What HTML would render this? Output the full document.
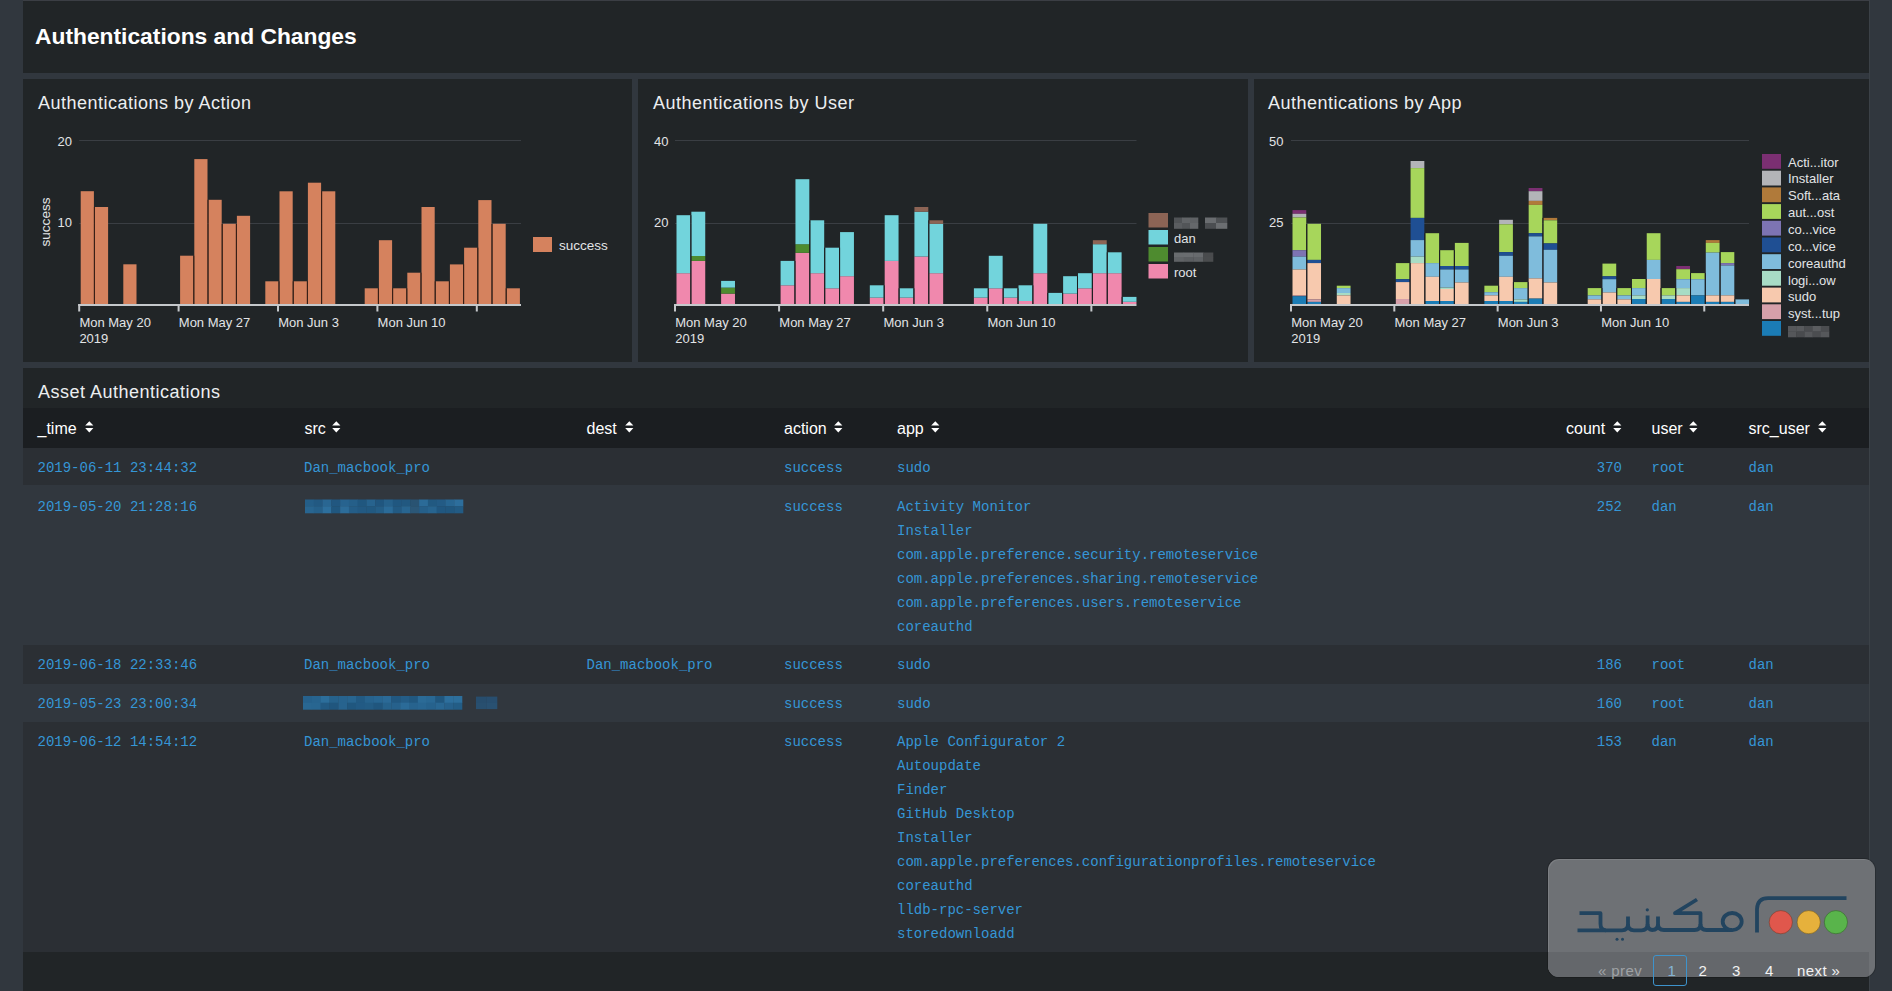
<!DOCTYPE html><html><head><meta charset="utf-8"><style>
html,body{margin:0;padding:0;}
body{width:1892px;height:991px;overflow:hidden;background:#31373e;position:relative;font-family:'Liberation Sans', sans-serif;}
</style></head><body>
<div style="position:absolute;left:23px;top:0px;width:1846px;height:73px;background:#212527;"></div>
<div style="position:absolute;left:23px;top:0px;width:1846px;height:1px;background:#3b3e44;"></div>
<div style="position:absolute;left:35px;top:25.10px;font-size:22.8px;line-height:22.8px;font-family:'Liberation Sans', sans-serif;color:#ffffff;font-weight:bold;white-space:pre;letter-spacing:0px;">Authentications and Changes</div>
<div style="position:absolute;left:23px;top:79px;width:609px;height:283px;background:#212527;"></div>
<div style="position:absolute;left:638px;top:79px;width:610px;height:283px;background:#212527;"></div>
<div style="position:absolute;left:1254px;top:79px;width:615px;height:283px;background:#212527;"></div>
<div style="position:absolute;left:38px;top:93.66px;font-size:18px;line-height:18px;font-family:'Liberation Sans', sans-serif;color:#eceef0;font-weight:normal;white-space:pre;letter-spacing:0.5px;">Authentications by Action</div>
<div style="position:absolute;left:653px;top:93.66px;font-size:18px;line-height:18px;font-family:'Liberation Sans', sans-serif;color:#eceef0;font-weight:normal;white-space:pre;letter-spacing:0.5px;">Authentications by User</div>
<div style="position:absolute;left:1268px;top:93.66px;font-size:18px;line-height:18px;font-family:'Liberation Sans', sans-serif;color:#eceef0;font-weight:normal;white-space:pre;letter-spacing:0.5px;">Authentications by App</div>
<svg style="position:absolute;left:0;top:0" width="1892" height="991"><rect x="79.2" y="140" width="441.8" height="1" fill="#3a3e43"/><rect x="79.2" y="223" width="441.8" height="1" fill="#3a3e43"/><rect x="80.70" y="191.2" width="13.20" height="112.80" fill="#d5825e"/><rect x="94.90" y="207" width="13.20" height="97.00" fill="#d5825e"/><rect x="123.30" y="264.3" width="13.20" height="39.70" fill="#d5825e"/><rect x="180.10" y="255.7" width="13.20" height="48.30" fill="#d5825e"/><rect x="194.30" y="159.1" width="13.20" height="144.90" fill="#d5825e"/><rect x="208.50" y="199.8" width="13.20" height="104.20" fill="#d5825e"/><rect x="222.70" y="223.8" width="13.20" height="80.20" fill="#d5825e"/><rect x="236.90" y="215.8" width="13.20" height="88.20" fill="#d5825e"/><rect x="265.30" y="281.3" width="13.20" height="22.70" fill="#d5825e"/><rect x="279.50" y="191.3" width="13.20" height="112.70" fill="#d5825e"/><rect x="293.70" y="281.3" width="13.20" height="22.70" fill="#d5825e"/><rect x="307.90" y="182.7" width="13.20" height="121.30" fill="#d5825e"/><rect x="322.10" y="191.3" width="13.20" height="112.70" fill="#d5825e"/><rect x="364.70" y="288.3" width="13.20" height="15.70" fill="#d5825e"/><rect x="378.90" y="240.2" width="13.20" height="63.80" fill="#d5825e"/><rect x="393.10" y="288.3" width="13.20" height="15.70" fill="#d5825e"/><rect x="407.30" y="272.7" width="13.20" height="31.30" fill="#d5825e"/><rect x="421.50" y="207" width="13.20" height="97.00" fill="#d5825e"/><rect x="435.70" y="281.3" width="13.20" height="22.70" fill="#d5825e"/><rect x="449.90" y="264.4" width="13.20" height="39.60" fill="#d5825e"/><rect x="464.10" y="247.7" width="13.20" height="56.30" fill="#d5825e"/><rect x="478.30" y="200.1" width="13.20" height="103.90" fill="#d5825e"/><rect x="492.50" y="223.8" width="13.20" height="80.20" fill="#d5825e"/><rect x="506.70" y="288.3" width="13.20" height="15.70" fill="#d5825e"/><rect x="93.90" y="207" width="1" height="97.00" fill="#3a1f15"/><rect x="193.30" y="255.7" width="1" height="48.30" fill="#3a1f15"/><rect x="207.50" y="199.8" width="1" height="104.20" fill="#3a1f15"/><rect x="221.70" y="223.8" width="1" height="80.20" fill="#3a1f15"/><rect x="235.90" y="223.8" width="1" height="80.20" fill="#3a1f15"/><rect x="278.50" y="281.3" width="1" height="22.70" fill="#3a1f15"/><rect x="292.70" y="281.3" width="1" height="22.70" fill="#3a1f15"/><rect x="306.90" y="281.3" width="1" height="22.70" fill="#3a1f15"/><rect x="321.10" y="191.3" width="1" height="112.70" fill="#3a1f15"/><rect x="377.90" y="288.3" width="1" height="15.70" fill="#3a1f15"/><rect x="392.10" y="288.3" width="1" height="15.70" fill="#3a1f15"/><rect x="406.30" y="288.3" width="1" height="15.70" fill="#3a1f15"/><rect x="420.50" y="272.7" width="1" height="31.30" fill="#3a1f15"/><rect x="434.70" y="281.3" width="1" height="22.70" fill="#3a1f15"/><rect x="448.90" y="281.3" width="1" height="22.70" fill="#3a1f15"/><rect x="463.10" y="264.4" width="1" height="39.60" fill="#3a1f15"/><rect x="477.30" y="247.7" width="1" height="56.30" fill="#3a1f15"/><rect x="491.50" y="223.8" width="1" height="80.20" fill="#3a1f15"/><rect x="505.70" y="288.3" width="1" height="15.70" fill="#3a1f15"/><rect x="78.2" y="304" width="442.8" height="2" fill="#c5c8cb"/><rect x="78.2" y="304" width="2" height="7.5" fill="#c5c8cb"/><rect x="177.6" y="304" width="2" height="7.5" fill="#c5c8cb"/><rect x="277.0" y="304" width="2" height="7.5" fill="#c5c8cb"/><rect x="376.4" y="304" width="2" height="7.5" fill="#c5c8cb"/><rect x="475.79999999999995" y="304" width="2" height="7.5" fill="#c5c8cb"/><rect x="675.0" y="140" width="461.5" height="1" fill="#3a3e43"/><rect x="675.0" y="223" width="461.5" height="1" fill="#3a3e43"/><rect x="676.50" y="273.2" width="13.87" height="30.80" fill="#f088ad"/><rect x="676.50" y="215.2" width="13.87" height="58.00" fill="#72d4dc"/><rect x="691.37" y="260.9" width="13.87" height="43.10" fill="#f088ad"/><rect x="691.37" y="256" width="13.87" height="4.90" fill="#4e8b2f"/><rect x="691.37" y="211.7" width="13.87" height="44.30" fill="#72d4dc"/><rect x="721.11" y="293.6" width="13.87" height="10.40" fill="#f088ad"/><rect x="721.11" y="287.6" width="13.87" height="6.00" fill="#4e8b2f"/><rect x="721.11" y="280.9" width="13.87" height="6.70" fill="#72d4dc"/><rect x="780.59" y="285.3" width="13.87" height="18.70" fill="#f088ad"/><rect x="780.59" y="260.9" width="13.87" height="24.40" fill="#72d4dc"/><rect x="795.46" y="252.8" width="13.87" height="51.20" fill="#f088ad"/><rect x="795.46" y="244.2" width="13.87" height="8.60" fill="#4e8b2f"/><rect x="795.46" y="179.2" width="13.87" height="65.00" fill="#72d4dc"/><rect x="810.33" y="273.2" width="13.87" height="30.80" fill="#f088ad"/><rect x="810.33" y="220.3" width="13.87" height="52.90" fill="#72d4dc"/><rect x="825.20" y="288.3" width="13.87" height="15.70" fill="#f088ad"/><rect x="825.20" y="247.7" width="13.87" height="40.60" fill="#72d4dc"/><rect x="840.07" y="276.2" width="13.87" height="27.80" fill="#f088ad"/><rect x="840.07" y="232.1" width="13.87" height="44.10" fill="#72d4dc"/><rect x="869.81" y="297.6" width="13.87" height="6.40" fill="#f088ad"/><rect x="869.81" y="285.3" width="13.87" height="12.30" fill="#72d4dc"/><rect x="884.68" y="260.9" width="13.87" height="43.10" fill="#f088ad"/><rect x="884.68" y="215.2" width="13.87" height="45.70" fill="#72d4dc"/><rect x="899.55" y="297.6" width="13.87" height="6.40" fill="#f088ad"/><rect x="899.55" y="288.3" width="13.87" height="9.30" fill="#72d4dc"/><rect x="914.42" y="256.5" width="13.87" height="47.50" fill="#f088ad"/><rect x="914.42" y="211.7" width="13.87" height="44.80" fill="#72d4dc"/><rect x="914.42" y="207" width="13.87" height="4.70" fill="#8c6455"/><rect x="929.29" y="273.2" width="13.87" height="30.80" fill="#f088ad"/><rect x="929.29" y="223.8" width="13.87" height="49.40" fill="#72d4dc"/><rect x="929.29" y="220.3" width="13.87" height="3.50" fill="#8c6455"/><rect x="973.90" y="297.6" width="13.87" height="6.40" fill="#f088ad"/><rect x="973.90" y="288.3" width="13.87" height="9.30" fill="#72d4dc"/><rect x="988.77" y="288.3" width="13.87" height="15.70" fill="#f088ad"/><rect x="988.77" y="255.8" width="13.87" height="32.50" fill="#72d4dc"/><rect x="1003.64" y="297.6" width="13.87" height="6.40" fill="#f088ad"/><rect x="1003.64" y="288.3" width="13.87" height="9.30" fill="#72d4dc"/><rect x="1018.51" y="301" width="13.87" height="3.00" fill="#f088ad"/><rect x="1018.51" y="285.3" width="13.87" height="15.70" fill="#72d4dc"/><rect x="1033.38" y="273.2" width="13.87" height="30.80" fill="#f088ad"/><rect x="1033.38" y="223.8" width="13.87" height="49.40" fill="#72d4dc"/><rect x="1048.25" y="292.9" width="13.87" height="11.10" fill="#72d4dc"/><rect x="1063.12" y="293.6" width="13.87" height="10.40" fill="#f088ad"/><rect x="1063.12" y="276.2" width="13.87" height="17.40" fill="#72d4dc"/><rect x="1077.99" y="288.3" width="13.87" height="15.70" fill="#f088ad"/><rect x="1077.99" y="273.2" width="13.87" height="15.10" fill="#72d4dc"/><rect x="1092.86" y="273.2" width="13.87" height="30.80" fill="#f088ad"/><rect x="1092.86" y="244.2" width="13.87" height="29.00" fill="#72d4dc"/><rect x="1092.86" y="240.2" width="13.87" height="4.00" fill="#8c6455"/><rect x="1107.73" y="273.2" width="13.87" height="30.80" fill="#f088ad"/><rect x="1107.73" y="252.3" width="13.87" height="20.90" fill="#72d4dc"/><rect x="1122.60" y="301.8" width="13.87" height="2.20" fill="#f088ad"/><rect x="1122.60" y="296.9" width="13.87" height="4.90" fill="#72d4dc"/><rect x="690.37" y="215.2" width="1" height="88.80" fill="#1c1c1f"/><rect x="794.46" y="260.9" width="1" height="43.10" fill="#1c1c1f"/><rect x="809.33" y="220.3" width="1" height="83.70" fill="#1c1c1f"/><rect x="824.20" y="247.7" width="1" height="56.30" fill="#1c1c1f"/><rect x="839.07" y="247.7" width="1" height="56.30" fill="#1c1c1f"/><rect x="883.68" y="285.3" width="1" height="18.70" fill="#1c1c1f"/><rect x="898.55" y="288.3" width="1" height="15.70" fill="#1c1c1f"/><rect x="913.42" y="288.3" width="1" height="15.70" fill="#1c1c1f"/><rect x="928.29" y="220.3" width="1" height="83.70" fill="#1c1c1f"/><rect x="987.77" y="288.3" width="1" height="15.70" fill="#1c1c1f"/><rect x="1002.64" y="288.3" width="1" height="15.70" fill="#1c1c1f"/><rect x="1017.51" y="288.3" width="1" height="15.70" fill="#1c1c1f"/><rect x="1032.38" y="285.3" width="1" height="18.70" fill="#1c1c1f"/><rect x="1047.25" y="292.9" width="1" height="11.10" fill="#1c1c1f"/><rect x="1062.12" y="292.9" width="1" height="11.10" fill="#1c1c1f"/><rect x="1076.99" y="276.2" width="1" height="27.80" fill="#1c1c1f"/><rect x="1091.86" y="273.2" width="1" height="30.80" fill="#1c1c1f"/><rect x="1106.73" y="252.3" width="1" height="51.70" fill="#1c1c1f"/><rect x="1121.60" y="296.9" width="1" height="7.10" fill="#1c1c1f"/><rect x="674.0" y="304" width="462.5" height="2" fill="#c5c8cb"/><rect x="674.0" y="304" width="2" height="7.5" fill="#c5c8cb"/><rect x="778.09" y="304" width="2" height="7.5" fill="#c5c8cb"/><rect x="882.18" y="304" width="2" height="7.5" fill="#c5c8cb"/><rect x="986.27" y="304" width="2" height="7.5" fill="#c5c8cb"/><rect x="1090.36" y="304" width="2" height="7.5" fill="#c5c8cb"/><rect x="1291.0" y="140" width="458.0" height="1" fill="#3a3e43"/><rect x="1291.0" y="223" width="458.0" height="1" fill="#3a3e43"/><rect x="1292.50" y="210.1" width="13.76" height="3.70" fill="#7b2f72"/><rect x="1292.50" y="213.8" width="13.76" height="3.70" fill="#b3b4b8"/><rect x="1292.50" y="217.5" width="13.76" height="32.70" fill="#a7d65b"/><rect x="1292.50" y="250.2" width="13.76" height="6.40" fill="#7d74b3"/><rect x="1292.50" y="256.6" width="13.76" height="12.90" fill="#7fbcdc"/><rect x="1292.50" y="269.5" width="13.76" height="25.90" fill="#f7c9ae"/><rect x="1292.50" y="295.4" width="13.76" height="0.80" fill="#d6a0aa"/><rect x="1292.50" y="296.2" width="13.76" height="7.80" fill="#1b7cb5"/><rect x="1307.26" y="223.8" width="13.76" height="36.10" fill="#a7d65b"/><rect x="1307.26" y="259.9" width="13.76" height="3.20" fill="#1f4f93"/><rect x="1307.26" y="263.1" width="13.76" height="36.30" fill="#f7c9ae"/><rect x="1307.26" y="299.4" width="13.76" height="2.50" fill="#d6a0aa"/><rect x="1307.26" y="301.9" width="13.76" height="2.10" fill="#1b7cb5"/><rect x="1336.78" y="285.7" width="13.76" height="2.40" fill="#a7d65b"/><rect x="1336.78" y="288.1" width="13.76" height="4.90" fill="#7fbcdc"/><rect x="1336.78" y="293" width="13.76" height="2.40" fill="#a8dcc5"/><rect x="1336.78" y="295.4" width="13.76" height="8.60" fill="#f7c9ae"/><rect x="1395.82" y="263.1" width="13.76" height="16.10" fill="#a7d65b"/><rect x="1395.82" y="279.2" width="13.76" height="2.90" fill="#1f4f93"/><rect x="1395.82" y="282.1" width="13.76" height="16.90" fill="#f7c9ae"/><rect x="1395.82" y="299" width="13.76" height="5.00" fill="#d6a0aa"/><rect x="1410.58" y="161" width="13.76" height="7.10" fill="#b3b4b8"/><rect x="1410.58" y="168.1" width="13.76" height="49.80" fill="#a7d65b"/><rect x="1410.58" y="217.9" width="13.76" height="22.20" fill="#1f4f93"/><rect x="1410.58" y="240.1" width="13.76" height="16.50" fill="#7fbcdc"/><rect x="1410.58" y="256.6" width="13.76" height="6.50" fill="#a8dcc5"/><rect x="1410.58" y="263.1" width="13.76" height="40.90" fill="#f7c9ae"/><rect x="1425.34" y="233.2" width="13.76" height="29.90" fill="#a7d65b"/><rect x="1425.34" y="263.1" width="13.76" height="13.70" fill="#7fbcdc"/><rect x="1425.34" y="276.8" width="13.76" height="24.20" fill="#f7c9ae"/><rect x="1425.34" y="301" width="13.76" height="3.00" fill="#1b7cb5"/><rect x="1440.10" y="250.2" width="13.76" height="15.80" fill="#a7d65b"/><rect x="1440.10" y="266" width="13.76" height="3.50" fill="#1f4f93"/><rect x="1440.10" y="269.5" width="13.76" height="18.10" fill="#7fbcdc"/><rect x="1440.10" y="287.6" width="13.76" height="1.40" fill="#a8dcc5"/><rect x="1440.10" y="289" width="13.76" height="12.00" fill="#f7c9ae"/><rect x="1440.10" y="301" width="13.76" height="3.00" fill="#1b7cb5"/><rect x="1454.86" y="242.9" width="13.76" height="23.10" fill="#a7d65b"/><rect x="1454.86" y="266" width="13.76" height="3.50" fill="#1f4f93"/><rect x="1454.86" y="269.5" width="13.76" height="13.00" fill="#7fbcdc"/><rect x="1454.86" y="282.5" width="13.76" height="21.50" fill="#f7c9ae"/><rect x="1484.38" y="285.7" width="13.76" height="6.50" fill="#a7d65b"/><rect x="1484.38" y="292.2" width="13.76" height="3.20" fill="#7fbcdc"/><rect x="1484.38" y="295.4" width="13.76" height="5.60" fill="#f7c9ae"/><rect x="1484.38" y="301" width="13.76" height="3.00" fill="#1b7cb5"/><rect x="1499.14" y="219.8" width="13.76" height="4.50" fill="#b3b4b8"/><rect x="1499.14" y="224.3" width="13.76" height="27.80" fill="#a7d65b"/><rect x="1499.14" y="252.1" width="13.76" height="3.70" fill="#1f4f93"/><rect x="1499.14" y="255.8" width="13.76" height="21.00" fill="#7fbcdc"/><rect x="1499.14" y="276.8" width="13.76" height="24.20" fill="#f7c9ae"/><rect x="1499.14" y="301" width="13.76" height="3.00" fill="#1b7cb5"/><rect x="1513.90" y="282.1" width="13.76" height="6.00" fill="#a7d65b"/><rect x="1513.90" y="288.1" width="13.76" height="11.30" fill="#7fbcdc"/><rect x="1513.90" y="299.4" width="13.76" height="2.50" fill="#a8dcc5"/><rect x="1513.90" y="301.9" width="13.76" height="2.10" fill="#1b7cb5"/><rect x="1528.66" y="188" width="13.76" height="3.20" fill="#7b2f72"/><rect x="1528.66" y="191.2" width="13.76" height="9.70" fill="#b3b4b8"/><rect x="1528.66" y="200.9" width="13.76" height="4.00" fill="#b07a3a"/><rect x="1528.66" y="204.9" width="13.76" height="28.30" fill="#a7d65b"/><rect x="1528.66" y="233.2" width="13.76" height="3.20" fill="#1f4f93"/><rect x="1528.66" y="236.4" width="13.76" height="42.00" fill="#7fbcdc"/><rect x="1528.66" y="278.4" width="13.76" height="20.20" fill="#f7c9ae"/><rect x="1528.66" y="298.6" width="13.76" height="5.40" fill="#1b7cb5"/><rect x="1543.42" y="217.9" width="13.76" height="2.40" fill="#b07a3a"/><rect x="1543.42" y="220.3" width="13.76" height="23.10" fill="#a7d65b"/><rect x="1543.42" y="243.4" width="13.76" height="6.40" fill="#1f4f93"/><rect x="1543.42" y="249.8" width="13.76" height="32.70" fill="#7fbcdc"/><rect x="1543.42" y="282.5" width="13.76" height="21.50" fill="#f7c9ae"/><rect x="1587.70" y="288.1" width="13.76" height="7.30" fill="#a7d65b"/><rect x="1587.70" y="295.4" width="13.76" height="4.00" fill="#7fbcdc"/><rect x="1587.70" y="299.4" width="13.76" height="4.60" fill="#f7c9ae"/><rect x="1602.46" y="263.6" width="13.76" height="12.70" fill="#a7d65b"/><rect x="1602.46" y="276.3" width="13.76" height="2.90" fill="#1f4f93"/><rect x="1602.46" y="279.2" width="13.76" height="13.30" fill="#7fbcdc"/><rect x="1602.46" y="292.5" width="13.76" height="11.50" fill="#f7c9ae"/><rect x="1617.22" y="288.1" width="13.76" height="7.30" fill="#a7d65b"/><rect x="1617.22" y="295.4" width="13.76" height="4.00" fill="#7fbcdc"/><rect x="1617.22" y="299.4" width="13.76" height="4.60" fill="#f7c9ae"/><rect x="1631.98" y="279" width="13.76" height="9.10" fill="#a7d65b"/><rect x="1631.98" y="288.1" width="13.76" height="7.30" fill="#7fbcdc"/><rect x="1631.98" y="295.4" width="13.76" height="3.60" fill="#a8dcc5"/><rect x="1631.98" y="299" width="13.76" height="5.00" fill="#1b7cb5"/><rect x="1646.74" y="233.2" width="13.76" height="26.70" fill="#a7d65b"/><rect x="1646.74" y="259.9" width="13.76" height="19.10" fill="#7fbcdc"/><rect x="1646.74" y="279" width="13.76" height="25.00" fill="#f7c9ae"/><rect x="1661.50" y="288.1" width="13.76" height="7.30" fill="#a7d65b"/><rect x="1661.50" y="295.4" width="13.76" height="3.60" fill="#a8dcc5"/><rect x="1661.50" y="299" width="13.76" height="5.00" fill="#1b7cb5"/><rect x="1676.26" y="266" width="13.76" height="3.20" fill="#7b2f72"/><rect x="1676.26" y="269.2" width="13.76" height="10.00" fill="#a7d65b"/><rect x="1676.26" y="279.2" width="13.76" height="8.90" fill="#7fbcdc"/><rect x="1676.26" y="288.1" width="13.76" height="7.30" fill="#a8dcc5"/><rect x="1676.26" y="295.4" width="13.76" height="6.50" fill="#f7c9ae"/><rect x="1676.26" y="301.9" width="13.76" height="2.10" fill="#1b7cb5"/><rect x="1691.02" y="273.1" width="13.76" height="6.10" fill="#a7d65b"/><rect x="1691.02" y="279.2" width="13.76" height="16.20" fill="#7fbcdc"/><rect x="1691.02" y="295.4" width="13.76" height="8.60" fill="#1b7cb5"/><rect x="1705.78" y="240.1" width="13.76" height="2.80" fill="#b07a3a"/><rect x="1705.78" y="242.9" width="13.76" height="9.70" fill="#a7d65b"/><rect x="1705.78" y="252.6" width="13.76" height="42.80" fill="#7fbcdc"/><rect x="1705.78" y="295.4" width="13.76" height="6.50" fill="#f7c9ae"/><rect x="1705.78" y="301.9" width="13.76" height="2.10" fill="#1b7cb5"/><rect x="1720.54" y="252.1" width="13.76" height="11.00" fill="#a7d65b"/><rect x="1720.54" y="263.1" width="13.76" height="2.40" fill="#7d74b3"/><rect x="1720.54" y="265.5" width="13.76" height="29.90" fill="#7fbcdc"/><rect x="1720.54" y="295.4" width="13.76" height="6.50" fill="#f7c9ae"/><rect x="1720.54" y="301.9" width="13.76" height="2.10" fill="#1b7cb5"/><rect x="1735.30" y="299.4" width="13.76" height="4.60" fill="#7fbcdc"/><rect x="1306.26" y="223.8" width="1" height="80.20" fill="#1c1c1f"/><rect x="1409.58" y="263.1" width="1" height="40.90" fill="#1c1c1f"/><rect x="1424.34" y="233.2" width="1" height="70.80" fill="#1c1c1f"/><rect x="1439.10" y="250.2" width="1" height="53.80" fill="#1c1c1f"/><rect x="1453.86" y="250.2" width="1" height="53.80" fill="#1c1c1f"/><rect x="1498.14" y="285.7" width="1" height="18.30" fill="#1c1c1f"/><rect x="1512.90" y="282.1" width="1" height="21.90" fill="#1c1c1f"/><rect x="1527.66" y="282.1" width="1" height="21.90" fill="#1c1c1f"/><rect x="1542.42" y="217.9" width="1" height="86.10" fill="#1c1c1f"/><rect x="1601.46" y="288.1" width="1" height="15.90" fill="#1c1c1f"/><rect x="1616.22" y="288.1" width="1" height="15.90" fill="#1c1c1f"/><rect x="1630.98" y="288.1" width="1" height="15.90" fill="#1c1c1f"/><rect x="1645.74" y="279" width="1" height="25.00" fill="#1c1c1f"/><rect x="1660.50" y="288.1" width="1" height="15.90" fill="#1c1c1f"/><rect x="1675.26" y="288.1" width="1" height="15.90" fill="#1c1c1f"/><rect x="1690.02" y="273.1" width="1" height="30.90" fill="#1c1c1f"/><rect x="1704.78" y="273.1" width="1" height="30.90" fill="#1c1c1f"/><rect x="1719.54" y="252.1" width="1" height="51.90" fill="#1c1c1f"/><rect x="1734.30" y="299.4" width="1" height="4.60" fill="#1c1c1f"/><rect x="1290.0" y="304" width="459.0" height="2" fill="#c5c8cb"/><rect x="1290.0" y="304" width="2" height="7.5" fill="#c5c8cb"/><rect x="1393.32" y="304" width="2" height="7.5" fill="#c5c8cb"/><rect x="1496.6399999999999" y="304" width="2" height="7.5" fill="#c5c8cb"/><rect x="1599.96" y="304" width="2" height="7.5" fill="#c5c8cb"/><rect x="1703.28" y="304" width="2" height="7.5" fill="#c5c8cb"/><rect x="533" y="237" width="19" height="15" fill="#d5825e"/><rect x="1148.5" y="213" width="19.5" height="14.5" fill="#8c6455"/><rect x="1148.5" y="230" width="19.5" height="14.5" fill="#72d4dc"/><rect x="1148.5" y="247" width="19.5" height="14.5" fill="#4e8b2f"/><rect x="1148.5" y="264" width="19.5" height="14.5" fill="#f088ad"/><rect x="1762" y="154.0" width="19" height="14.8" fill="#7b2f72"/><rect x="1762" y="170.7" width="19" height="14.8" fill="#b3b4b8"/><rect x="1762" y="187.4" width="19" height="14.8" fill="#b07a3a"/><rect x="1762" y="204.1" width="19" height="14.8" fill="#a7d65b"/><rect x="1762" y="220.8" width="19" height="14.8" fill="#7d74b3"/><rect x="1762" y="237.5" width="19" height="14.8" fill="#1f4f93"/><rect x="1762" y="254.2" width="19" height="14.8" fill="#7fbcdc"/><rect x="1762" y="270.9" width="19" height="14.8" fill="#a8dcc5"/><rect x="1762" y="287.6" width="19" height="14.8" fill="#f7c9ae"/><rect x="1762" y="304.3" width="19" height="14.8" fill="#d6a0aa"/><rect x="1762" y="321.0" width="19" height="14.8" fill="#1b7cb5"/></svg>
<div style="position:absolute;left:32px;width:40px;text-align:right;top:135.10px;font-size:13px;line-height:13px;color:#e2e4e6">20</div>
<div style="position:absolute;left:32px;width:40px;text-align:right;top:216.00px;font-size:13px;line-height:13px;color:#e2e4e6">10</div>
<div style="position:absolute;left:628.5px;width:40px;text-align:right;top:135.10px;font-size:13px;line-height:13px;color:#e2e4e6">40</div>
<div style="position:absolute;left:628.5px;width:40px;text-align:right;top:216.00px;font-size:13px;line-height:13px;color:#e2e4e6">20</div>
<div style="position:absolute;left:1243.5px;width:40px;text-align:right;top:135.10px;font-size:13px;line-height:13px;color:#e2e4e6">50</div>
<div style="position:absolute;left:1243.5px;width:40px;text-align:right;top:216.00px;font-size:13px;line-height:13px;color:#e2e4e6">25</div>
<div style="position:absolute;left:21px;top:214.2px;width:50px;height:16px;font-size:13.6px;line-height:16px;color:#e2e4e6;transform:rotate(-90deg);transform-origin:25px 8px;text-align:center">success</div>
<div style="position:absolute;left:79.4px;top:315.50px;font-size:13px;line-height:13px;font-family:'Liberation Sans', sans-serif;color:#e2e4e6;font-weight:normal;white-space:pre;letter-spacing:0px;">Mon May 20</div>
<div style="position:absolute;left:178.8px;top:315.50px;font-size:13px;line-height:13px;font-family:'Liberation Sans', sans-serif;color:#e2e4e6;font-weight:normal;white-space:pre;letter-spacing:0px;">Mon May 27</div>
<div style="position:absolute;left:278.2px;top:315.50px;font-size:13px;line-height:13px;font-family:'Liberation Sans', sans-serif;color:#e2e4e6;font-weight:normal;white-space:pre;letter-spacing:0px;">Mon Jun 3</div>
<div style="position:absolute;left:377.6px;top:315.50px;font-size:13px;line-height:13px;font-family:'Liberation Sans', sans-serif;color:#e2e4e6;font-weight:normal;white-space:pre;letter-spacing:0px;">Mon Jun 10</div>
<div style="position:absolute;left:79.4px;top:332.00px;font-size:13px;line-height:13px;font-family:'Liberation Sans', sans-serif;color:#e2e4e6;font-weight:normal;white-space:pre;letter-spacing:0px;">2019</div>
<div style="position:absolute;left:675.2px;top:315.50px;font-size:13px;line-height:13px;font-family:'Liberation Sans', sans-serif;color:#e2e4e6;font-weight:normal;white-space:pre;letter-spacing:0px;">Mon May 20</div>
<div style="position:absolute;left:779.3px;top:315.50px;font-size:13px;line-height:13px;font-family:'Liberation Sans', sans-serif;color:#e2e4e6;font-weight:normal;white-space:pre;letter-spacing:0px;">Mon May 27</div>
<div style="position:absolute;left:883.4px;top:315.50px;font-size:13px;line-height:13px;font-family:'Liberation Sans', sans-serif;color:#e2e4e6;font-weight:normal;white-space:pre;letter-spacing:0px;">Mon Jun 3</div>
<div style="position:absolute;left:987.5px;top:315.50px;font-size:13px;line-height:13px;font-family:'Liberation Sans', sans-serif;color:#e2e4e6;font-weight:normal;white-space:pre;letter-spacing:0px;">Mon Jun 10</div>
<div style="position:absolute;left:675.2px;top:332.00px;font-size:13px;line-height:13px;font-family:'Liberation Sans', sans-serif;color:#e2e4e6;font-weight:normal;white-space:pre;letter-spacing:0px;">2019</div>
<div style="position:absolute;left:1291.2px;top:315.50px;font-size:13px;line-height:13px;font-family:'Liberation Sans', sans-serif;color:#e2e4e6;font-weight:normal;white-space:pre;letter-spacing:0px;">Mon May 20</div>
<div style="position:absolute;left:1394.5px;top:315.50px;font-size:13px;line-height:13px;font-family:'Liberation Sans', sans-serif;color:#e2e4e6;font-weight:normal;white-space:pre;letter-spacing:0px;">Mon May 27</div>
<div style="position:absolute;left:1497.8px;top:315.50px;font-size:13px;line-height:13px;font-family:'Liberation Sans', sans-serif;color:#e2e4e6;font-weight:normal;white-space:pre;letter-spacing:0px;">Mon Jun 3</div>
<div style="position:absolute;left:1601.2px;top:315.50px;font-size:13px;line-height:13px;font-family:'Liberation Sans', sans-serif;color:#e2e4e6;font-weight:normal;white-space:pre;letter-spacing:0px;">Mon Jun 10</div>
<div style="position:absolute;left:1291.2px;top:332.00px;font-size:13px;line-height:13px;font-family:'Liberation Sans', sans-serif;color:#e2e4e6;font-weight:normal;white-space:pre;letter-spacing:0px;">2019</div>
<div style="position:absolute;left:559px;top:239.07px;font-size:13.5px;line-height:13.5px;font-family:'Liberation Sans', sans-serif;color:#e2e4e6;font-weight:normal;white-space:pre;letter-spacing:0px;">success</div>
<div style="position:absolute;left:1174px;top:232.00px;font-size:13px;line-height:13px;font-family:'Liberation Sans', sans-serif;color:#e2e4e6;font-weight:normal;white-space:pre;letter-spacing:0px;">dan</div>
<div style="position:absolute;left:1174px;top:266.00px;font-size:13px;line-height:13px;font-family:'Liberation Sans', sans-serif;color:#e2e4e6;font-weight:normal;white-space:pre;letter-spacing:0px;">root</div>
<div style="position:absolute;left:1788px;top:155.60px;font-size:13px;line-height:13px;font-family:'Liberation Sans', sans-serif;color:#e2e4e6;font-weight:normal;white-space:pre;letter-spacing:0px;">Acti...itor</div>
<div style="position:absolute;left:1788px;top:172.40px;font-size:13px;line-height:13px;font-family:'Liberation Sans', sans-serif;color:#e2e4e6;font-weight:normal;white-space:pre;letter-spacing:0px;">Installer</div>
<div style="position:absolute;left:1788px;top:189.30px;font-size:13px;line-height:13px;font-family:'Liberation Sans', sans-serif;color:#e2e4e6;font-weight:normal;white-space:pre;letter-spacing:0px;">Soft...ata</div>
<div style="position:absolute;left:1788px;top:206.10px;font-size:13px;line-height:13px;font-family:'Liberation Sans', sans-serif;color:#e2e4e6;font-weight:normal;white-space:pre;letter-spacing:0px;">aut...ost</div>
<div style="position:absolute;left:1788px;top:223.00px;font-size:13px;line-height:13px;font-family:'Liberation Sans', sans-serif;color:#e2e4e6;font-weight:normal;white-space:pre;letter-spacing:0px;">co...vice</div>
<div style="position:absolute;left:1788px;top:239.80px;font-size:13px;line-height:13px;font-family:'Liberation Sans', sans-serif;color:#e2e4e6;font-weight:normal;white-space:pre;letter-spacing:0px;">co...vice</div>
<div style="position:absolute;left:1788px;top:256.60px;font-size:13px;line-height:13px;font-family:'Liberation Sans', sans-serif;color:#e2e4e6;font-weight:normal;white-space:pre;letter-spacing:0px;">coreauthd</div>
<div style="position:absolute;left:1788px;top:273.50px;font-size:13px;line-height:13px;font-family:'Liberation Sans', sans-serif;color:#e2e4e6;font-weight:normal;white-space:pre;letter-spacing:0px;">logi...ow</div>
<div style="position:absolute;left:1788px;top:290.30px;font-size:13px;line-height:13px;font-family:'Liberation Sans', sans-serif;color:#e2e4e6;font-weight:normal;white-space:pre;letter-spacing:0px;">sudo</div>
<div style="position:absolute;left:1788px;top:307.20px;font-size:13px;line-height:13px;font-family:'Liberation Sans', sans-serif;color:#e2e4e6;font-weight:normal;white-space:pre;letter-spacing:0px;">syst...tup</div>
<div style="position:absolute;left:23px;top:368px;width:1846px;height:623px;background:#212527;"></div>
<div style="position:absolute;left:38px;top:382.76px;font-size:18px;line-height:18px;font-family:'Liberation Sans', sans-serif;color:#eceef0;font-weight:normal;white-space:pre;letter-spacing:0.5px;">Asset Authentications</div>
<div style="position:absolute;left:23px;top:408px;width:1846px;height:40px;background:#1b1e21;"></div>
<div style="position:absolute;left:23px;top:448px;width:1846px;height:37px;background:#2b2f34;"></div>
<div style="position:absolute;left:23px;top:485px;width:1846px;height:160px;background:#31373e;"></div>
<div style="position:absolute;left:23px;top:645px;width:1846px;height:39px;background:#2b2f34;"></div>
<div style="position:absolute;left:23px;top:684px;width:1846px;height:38px;background:#31373e;"></div>
<div style="position:absolute;left:23px;top:722px;width:1846px;height:230px;background:#2b2f34;"></div>
<div style="position:absolute;left:37.5px;top:420.76px;font-size:16px;line-height:16px;font-family:'Liberation Sans', sans-serif;color:#ffffff;font-weight:normal;white-space:pre;letter-spacing:0px;">_time</div>
<div style="position:absolute;left:304.5px;top:420.76px;font-size:16px;line-height:16px;font-family:'Liberation Sans', sans-serif;color:#ffffff;font-weight:normal;white-space:pre;letter-spacing:0px;">src</div>
<div style="position:absolute;left:586.5px;top:420.76px;font-size:16px;line-height:16px;font-family:'Liberation Sans', sans-serif;color:#ffffff;font-weight:normal;white-space:pre;letter-spacing:0px;">dest</div>
<div style="position:absolute;left:784px;top:420.76px;font-size:16px;line-height:16px;font-family:'Liberation Sans', sans-serif;color:#ffffff;font-weight:normal;white-space:pre;letter-spacing:0px;">action</div>
<div style="position:absolute;left:897px;top:420.76px;font-size:16px;line-height:16px;font-family:'Liberation Sans', sans-serif;color:#ffffff;font-weight:normal;white-space:pre;letter-spacing:0px;">app</div>
<div style="position:absolute;left:1566px;top:420.76px;font-size:16px;line-height:16px;font-family:'Liberation Sans', sans-serif;color:#ffffff;font-weight:normal;white-space:pre;letter-spacing:0px;">count</div>
<div style="position:absolute;left:1651.5px;top:420.76px;font-size:16px;line-height:16px;font-family:'Liberation Sans', sans-serif;color:#ffffff;font-weight:normal;white-space:pre;letter-spacing:0px;">user</div>
<div style="position:absolute;left:1748.5px;top:420.76px;font-size:16px;line-height:16px;font-family:'Liberation Sans', sans-serif;color:#ffffff;font-weight:normal;white-space:pre;letter-spacing:0px;">src_user</div>
<svg style="position:absolute;left:84.7px;top:421.2px" width="9" height="12" viewBox="0 0 9 12"><path d="M4.3 0.2 L8.4 4.4 L0.2 4.4 Z M0.2 7 L8.4 7 L4.3 11.4 Z" fill="#fff"/></svg>
<svg style="position:absolute;left:331.9px;top:421.2px" width="9" height="12" viewBox="0 0 9 12"><path d="M4.3 0.2 L8.4 4.4 L0.2 4.4 Z M0.2 7 L8.4 7 L4.3 11.4 Z" fill="#fff"/></svg>
<svg style="position:absolute;left:625.2px;top:421.2px" width="9" height="12" viewBox="0 0 9 12"><path d="M4.3 0.2 L8.4 4.4 L0.2 4.4 Z M0.2 7 L8.4 7 L4.3 11.4 Z" fill="#fff"/></svg>
<svg style="position:absolute;left:834.3px;top:421.2px" width="9" height="12" viewBox="0 0 9 12"><path d="M4.3 0.2 L8.4 4.4 L0.2 4.4 Z M0.2 7 L8.4 7 L4.3 11.4 Z" fill="#fff"/></svg>
<svg style="position:absolute;left:930.6px;top:421.2px" width="9" height="12" viewBox="0 0 9 12"><path d="M4.3 0.2 L8.4 4.4 L0.2 4.4 Z M0.2 7 L8.4 7 L4.3 11.4 Z" fill="#fff"/></svg>
<svg style="position:absolute;left:1612.8px;top:421.2px" width="9" height="12" viewBox="0 0 9 12"><path d="M4.3 0.2 L8.4 4.4 L0.2 4.4 Z M0.2 7 L8.4 7 L4.3 11.4 Z" fill="#fff"/></svg>
<svg style="position:absolute;left:1689.1px;top:421.2px" width="9" height="12" viewBox="0 0 9 12"><path d="M4.3 0.2 L8.4 4.4 L0.2 4.4 Z M0.2 7 L8.4 7 L4.3 11.4 Z" fill="#fff"/></svg>
<svg style="position:absolute;left:1817.6px;top:421.2px" width="9" height="12" viewBox="0 0 9 12"><path d="M4.3 0.2 L8.4 4.4 L0.2 4.4 Z M0.2 7 L8.4 7 L4.3 11.4 Z" fill="#fff"/></svg>
<svg style="position:absolute;left:0;top:0;filter:blur(0.7px)" width="1892" height="991"><rect x="1174.00" y="217.50" width="8.30" height="5.80" fill="rgb(80, 83, 86)"/><rect x="1182.00" y="217.50" width="8.30" height="5.80" fill="rgb(97, 100, 103)"/><rect x="1190.00" y="217.50" width="8.30" height="5.80" fill="rgb(95, 98, 101)"/><rect x="1174.00" y="223.00" width="8.30" height="5.80" fill="rgb(90, 93, 96)"/><rect x="1182.00" y="223.00" width="8.30" height="5.80" fill="rgb(82, 85, 88)"/><rect x="1190.00" y="223.00" width="8.30" height="5.80" fill="rgb(101, 104, 107)"/></svg>
<svg style="position:absolute;left:0;top:0;filter:blur(0.7px)" width="1892" height="991"><rect x="1205.00" y="217.50" width="11.30" height="5.80" fill="rgb(106, 109, 112)"/><rect x="1216.00" y="217.50" width="11.30" height="5.80" fill="rgb(79, 82, 85)"/><rect x="1205.00" y="223.00" width="11.30" height="5.80" fill="rgb(75, 78, 81)"/><rect x="1216.00" y="223.00" width="11.30" height="5.80" fill="rgb(107, 110, 113)"/></svg>
<svg style="position:absolute;left:0;top:0;filter:blur(0.7px)" width="1892" height="991"><rect x="1174.00" y="252.50" width="10.05" height="4.80" fill="rgb(105, 108, 111)"/><rect x="1183.75" y="252.50" width="10.05" height="4.80" fill="rgb(106, 109, 112)"/><rect x="1193.50" y="252.50" width="10.05" height="4.80" fill="rgb(104, 107, 110)"/><rect x="1203.25" y="252.50" width="10.05" height="4.80" fill="rgb(73, 75, 77)"/><rect x="1174.00" y="257.00" width="10.05" height="4.80" fill="rgb(96, 99, 102)"/><rect x="1183.75" y="257.00" width="10.05" height="4.80" fill="rgb(91, 94, 97)"/><rect x="1193.50" y="257.00" width="10.05" height="4.80" fill="rgb(94, 97, 100)"/><rect x="1203.25" y="257.00" width="10.05" height="4.80" fill="rgb(74, 76, 78)"/></svg>
<svg style="position:absolute;left:0;top:0;filter:blur(0.7px)" width="1892" height="991"><rect x="1788.00" y="326.00" width="8.50" height="5.80" fill="rgb(86, 88, 91)"/><rect x="1796.20" y="326.00" width="8.50" height="5.80" fill="rgb(88, 90, 93)"/><rect x="1804.40" y="326.00" width="8.50" height="5.80" fill="rgb(75, 77, 80)"/><rect x="1812.60" y="326.00" width="8.50" height="5.80" fill="rgb(91, 93, 96)"/><rect x="1820.80" y="326.00" width="8.50" height="5.80" fill="rgb(75, 77, 80)"/><rect x="1788.00" y="331.50" width="8.50" height="5.80" fill="rgb(85, 87, 90)"/><rect x="1796.20" y="331.50" width="8.50" height="5.80" fill="rgb(73, 75, 78)"/><rect x="1804.40" y="331.50" width="8.50" height="5.80" fill="rgb(87, 89, 92)"/><rect x="1812.60" y="331.50" width="8.50" height="5.80" fill="rgb(75, 77, 80)"/><rect x="1820.80" y="331.50" width="8.50" height="5.80" fill="rgb(86, 88, 91)"/></svg>
<div style="position:absolute;left:37.5px;top:461.37px;font-size:14px;line-height:14px;font-family:'Liberation Mono', monospace;color:#3596d6;font-weight:normal;white-space:pre;letter-spacing:0px;">2019-06-11 23:44:32</div>
<div style="position:absolute;left:304px;top:461.37px;font-size:14px;line-height:14px;font-family:'Liberation Mono', monospace;color:#3596d6;font-weight:normal;white-space:pre;letter-spacing:0px;">Dan_macbook_pro</div>
<div style="position:absolute;left:784px;top:461.37px;font-size:14px;line-height:14px;font-family:'Liberation Mono', monospace;color:#3596d6;font-weight:normal;white-space:pre;letter-spacing:0px;">success</div>
<div style="position:absolute;left:897px;top:461.37px;font-size:14px;line-height:14px;font-family:'Liberation Mono', monospace;color:#3596d6;font-weight:normal;white-space:pre;letter-spacing:0px;">sudo</div>
<div style="position:absolute;left:1560px;width:62px;text-align:right;top:461.37px;font-size:14px;line-height:14px;font-family:'Liberation Mono', monospace;color:#3596d6">370</div>
<div style="position:absolute;left:1651.5px;top:461.37px;font-size:14px;line-height:14px;font-family:'Liberation Mono', monospace;color:#3596d6;font-weight:normal;white-space:pre;letter-spacing:0px;">root</div>
<div style="position:absolute;left:1748.5px;top:461.37px;font-size:14px;line-height:14px;font-family:'Liberation Mono', monospace;color:#3596d6;font-weight:normal;white-space:pre;letter-spacing:0px;">dan</div>
<div style="position:absolute;left:37.5px;top:500.37px;font-size:14px;line-height:14px;font-family:'Liberation Mono', monospace;color:#3596d6;font-weight:normal;white-space:pre;letter-spacing:0px;">2019-05-20 21:28:16</div>
<div style="position:absolute;left:784px;top:500.37px;font-size:14px;line-height:14px;font-family:'Liberation Mono', monospace;color:#3596d6;font-weight:normal;white-space:pre;letter-spacing:0px;">success</div>
<div style="position:absolute;left:897px;top:500.37px;font-size:14px;line-height:14px;font-family:'Liberation Mono', monospace;color:#3596d6;font-weight:normal;white-space:pre;letter-spacing:0px;">Activity Monitor</div>
<div style="position:absolute;left:897px;top:524.37px;font-size:14px;line-height:14px;font-family:'Liberation Mono', monospace;color:#3596d6;font-weight:normal;white-space:pre;letter-spacing:0px;">Installer</div>
<div style="position:absolute;left:897px;top:548.37px;font-size:14px;line-height:14px;font-family:'Liberation Mono', monospace;color:#3596d6;font-weight:normal;white-space:pre;letter-spacing:0px;">com.apple.preference.security.remoteservice</div>
<div style="position:absolute;left:897px;top:572.37px;font-size:14px;line-height:14px;font-family:'Liberation Mono', monospace;color:#3596d6;font-weight:normal;white-space:pre;letter-spacing:0px;">com.apple.preferences.sharing.remoteservice</div>
<div style="position:absolute;left:897px;top:596.37px;font-size:14px;line-height:14px;font-family:'Liberation Mono', monospace;color:#3596d6;font-weight:normal;white-space:pre;letter-spacing:0px;">com.apple.preferences.users.remoteservice</div>
<div style="position:absolute;left:897px;top:620.37px;font-size:14px;line-height:14px;font-family:'Liberation Mono', monospace;color:#3596d6;font-weight:normal;white-space:pre;letter-spacing:0px;">coreauthd</div>
<div style="position:absolute;left:1560px;width:62px;text-align:right;top:500.37px;font-size:14px;line-height:14px;font-family:'Liberation Mono', monospace;color:#3596d6">252</div>
<div style="position:absolute;left:1651.5px;top:500.37px;font-size:14px;line-height:14px;font-family:'Liberation Mono', monospace;color:#3596d6;font-weight:normal;white-space:pre;letter-spacing:0px;">dan</div>
<div style="position:absolute;left:1748.5px;top:500.37px;font-size:14px;line-height:14px;font-family:'Liberation Mono', monospace;color:#3596d6;font-weight:normal;white-space:pre;letter-spacing:0px;">dan</div>
<svg style="position:absolute;left:0;top:0;filter:blur(0.7px)" width="1892" height="991"><rect x="305.00" y="499.50" width="9.08" height="7.05" fill="rgb(36, 94, 136)"/><rect x="313.78" y="499.50" width="9.08" height="7.05" fill="rgb(34, 89, 130)"/><rect x="322.56" y="499.50" width="9.08" height="7.05" fill="rgb(41, 102, 146)"/><rect x="331.33" y="499.50" width="9.08" height="7.05" fill="rgb(33, 87, 128)"/><rect x="340.11" y="499.50" width="9.08" height="7.05" fill="rgb(39, 99, 143)"/><rect x="348.89" y="499.50" width="9.08" height="7.05" fill="rgb(37, 95, 137)"/><rect x="357.67" y="499.50" width="9.08" height="7.05" fill="rgb(32, 87, 127)"/><rect x="366.44" y="499.50" width="9.08" height="7.05" fill="rgb(39, 99, 142)"/><rect x="375.22" y="499.50" width="9.08" height="7.05" fill="rgb(32, 86, 127)"/><rect x="384.00" y="499.50" width="9.08" height="7.05" fill="rgb(38, 97, 139)"/><rect x="392.78" y="499.50" width="9.08" height="7.05" fill="rgb(32, 87, 128)"/><rect x="401.56" y="499.50" width="9.08" height="7.05" fill="rgb(33, 88, 128)"/><rect x="410.33" y="499.50" width="9.08" height="7.05" fill="rgb(41, 83, 114)"/><rect x="419.11" y="499.50" width="9.08" height="7.05" fill="rgb(43, 107, 152)"/><rect x="427.89" y="499.50" width="9.08" height="7.05" fill="rgb(33, 89, 129)"/><rect x="436.67" y="499.50" width="9.08" height="7.05" fill="rgb(35, 91, 133)"/><rect x="445.44" y="499.50" width="9.08" height="7.05" fill="rgb(40, 102, 146)"/><rect x="454.22" y="499.50" width="9.08" height="7.05" fill="rgb(45, 110, 156)"/><rect x="305.00" y="506.25" width="9.08" height="7.05" fill="rgb(40, 101, 144)"/><rect x="313.78" y="506.25" width="9.08" height="7.05" fill="rgb(37, 96, 138)"/><rect x="322.56" y="506.25" width="9.08" height="7.05" fill="rgb(45, 111, 157)"/><rect x="331.33" y="506.25" width="9.08" height="7.05" fill="rgb(32, 87, 127)"/><rect x="340.11" y="506.25" width="9.08" height="7.05" fill="rgb(44, 108, 153)"/><rect x="348.89" y="506.25" width="9.08" height="7.05" fill="rgb(36, 93, 135)"/><rect x="357.67" y="506.25" width="9.08" height="7.05" fill="rgb(34, 89, 130)"/><rect x="366.44" y="506.25" width="9.08" height="7.05" fill="rgb(33, 89, 129)"/><rect x="375.22" y="506.25" width="9.08" height="7.05" fill="rgb(36, 94, 135)"/><rect x="384.00" y="506.25" width="9.08" height="7.05" fill="rgb(43, 107, 152)"/><rect x="392.78" y="506.25" width="9.08" height="7.05" fill="rgb(34, 90, 131)"/><rect x="401.56" y="506.25" width="9.08" height="7.05" fill="rgb(40, 101, 144)"/><rect x="410.33" y="506.25" width="9.08" height="7.05" fill="rgb(43, 87, 119)"/><rect x="419.11" y="506.25" width="9.08" height="7.05" fill="rgb(37, 95, 137)"/><rect x="427.89" y="506.25" width="9.08" height="7.05" fill="rgb(39, 100, 143)"/><rect x="436.67" y="506.25" width="9.08" height="7.05" fill="rgb(32, 87, 128)"/><rect x="445.44" y="506.25" width="9.08" height="7.05" fill="rgb(32, 87, 127)"/><rect x="454.22" y="506.25" width="9.08" height="7.05" fill="rgb(34, 91, 132)"/></svg>
<div style="position:absolute;left:37.5px;top:658.17px;font-size:14px;line-height:14px;font-family:'Liberation Mono', monospace;color:#3596d6;font-weight:normal;white-space:pre;letter-spacing:0px;">2019-06-18 22:33:46</div>
<div style="position:absolute;left:304px;top:658.17px;font-size:14px;line-height:14px;font-family:'Liberation Mono', monospace;color:#3596d6;font-weight:normal;white-space:pre;letter-spacing:0px;">Dan_macbook_pro</div>
<div style="position:absolute;left:586.5px;top:658.17px;font-size:14px;line-height:14px;font-family:'Liberation Mono', monospace;color:#3596d6;font-weight:normal;white-space:pre;letter-spacing:0px;">Dan_macbook_pro</div>
<div style="position:absolute;left:784px;top:658.17px;font-size:14px;line-height:14px;font-family:'Liberation Mono', monospace;color:#3596d6;font-weight:normal;white-space:pre;letter-spacing:0px;">success</div>
<div style="position:absolute;left:897px;top:658.17px;font-size:14px;line-height:14px;font-family:'Liberation Mono', monospace;color:#3596d6;font-weight:normal;white-space:pre;letter-spacing:0px;">sudo</div>
<div style="position:absolute;left:1560px;width:62px;text-align:right;top:658.17px;font-size:14px;line-height:14px;font-family:'Liberation Mono', monospace;color:#3596d6">186</div>
<div style="position:absolute;left:1651.5px;top:658.17px;font-size:14px;line-height:14px;font-family:'Liberation Mono', monospace;color:#3596d6;font-weight:normal;white-space:pre;letter-spacing:0px;">root</div>
<div style="position:absolute;left:1748.5px;top:658.17px;font-size:14px;line-height:14px;font-family:'Liberation Mono', monospace;color:#3596d6;font-weight:normal;white-space:pre;letter-spacing:0px;">dan</div>
<div style="position:absolute;left:37.5px;top:697.47px;font-size:14px;line-height:14px;font-family:'Liberation Mono', monospace;color:#3596d6;font-weight:normal;white-space:pre;letter-spacing:0px;">2019-05-23 23:00:34</div>
<div style="position:absolute;left:784px;top:697.47px;font-size:14px;line-height:14px;font-family:'Liberation Mono', monospace;color:#3596d6;font-weight:normal;white-space:pre;letter-spacing:0px;">success</div>
<div style="position:absolute;left:897px;top:697.47px;font-size:14px;line-height:14px;font-family:'Liberation Mono', monospace;color:#3596d6;font-weight:normal;white-space:pre;letter-spacing:0px;">sudo</div>
<div style="position:absolute;left:1560px;width:62px;text-align:right;top:697.47px;font-size:14px;line-height:14px;font-family:'Liberation Mono', monospace;color:#3596d6">160</div>
<div style="position:absolute;left:1651.5px;top:697.47px;font-size:14px;line-height:14px;font-family:'Liberation Mono', monospace;color:#3596d6;font-weight:normal;white-space:pre;letter-spacing:0px;">root</div>
<div style="position:absolute;left:1748.5px;top:697.47px;font-size:14px;line-height:14px;font-family:'Liberation Mono', monospace;color:#3596d6;font-weight:normal;white-space:pre;letter-spacing:0px;">dan</div>
<svg style="position:absolute;left:0;top:0;filter:blur(0.7px)" width="1892" height="991"><rect x="303.00" y="696.00" width="9.13" height="7.00" fill="rgb(38, 97, 140)"/><rect x="311.83" y="696.00" width="9.13" height="7.00" fill="rgb(39, 100, 143)"/><rect x="320.67" y="696.00" width="9.13" height="7.00" fill="rgb(44, 110, 155)"/><rect x="329.50" y="696.00" width="9.13" height="7.00" fill="rgb(38, 98, 140)"/><rect x="338.33" y="696.00" width="9.13" height="7.00" fill="rgb(39, 99, 142)"/><rect x="347.17" y="696.00" width="9.13" height="7.00" fill="rgb(40, 101, 144)"/><rect x="356.00" y="696.00" width="9.13" height="7.00" fill="rgb(34, 90, 131)"/><rect x="364.83" y="696.00" width="9.13" height="7.00" fill="rgb(39, 99, 142)"/><rect x="373.67" y="696.00" width="9.13" height="7.00" fill="rgb(40, 102, 146)"/><rect x="382.50" y="696.00" width="9.13" height="7.00" fill="rgb(43, 106, 151)"/><rect x="391.33" y="696.00" width="9.13" height="7.00" fill="rgb(33, 88, 129)"/><rect x="400.17" y="696.00" width="9.13" height="7.00" fill="rgb(36, 93, 135)"/><rect x="409.00" y="696.00" width="9.13" height="7.00" fill="rgb(33, 88, 128)"/><rect x="417.83" y="696.00" width="9.13" height="7.00" fill="rgb(43, 107, 151)"/><rect x="426.67" y="696.00" width="9.13" height="7.00" fill="rgb(41, 104, 148)"/><rect x="435.50" y="696.00" width="9.13" height="7.00" fill="rgb(32, 87, 127)"/><rect x="444.33" y="696.00" width="9.13" height="7.00" fill="rgb(45, 111, 157)"/><rect x="453.17" y="696.00" width="9.13" height="7.00" fill="rgb(45, 111, 156)"/><rect x="303.00" y="702.70" width="9.13" height="7.00" fill="rgb(41, 103, 146)"/><rect x="311.83" y="702.70" width="9.13" height="7.00" fill="rgb(40, 102, 145)"/><rect x="320.67" y="702.70" width="9.13" height="7.00" fill="rgb(34, 90, 131)"/><rect x="329.50" y="702.70" width="9.13" height="7.00" fill="rgb(32, 86, 126)"/><rect x="338.33" y="702.70" width="9.13" height="7.00" fill="rgb(39, 99, 142)"/><rect x="347.17" y="702.70" width="9.13" height="7.00" fill="rgb(32, 87, 127)"/><rect x="356.00" y="702.70" width="9.13" height="7.00" fill="rgb(34, 90, 132)"/><rect x="364.83" y="702.70" width="9.13" height="7.00" fill="rgb(35, 92, 133)"/><rect x="373.67" y="702.70" width="9.13" height="7.00" fill="rgb(32, 86, 126)"/><rect x="382.50" y="702.70" width="9.13" height="7.00" fill="rgb(38, 98, 140)"/><rect x="391.33" y="702.70" width="9.13" height="7.00" fill="rgb(38, 97, 140)"/><rect x="400.17" y="702.70" width="9.13" height="7.00" fill="rgb(43, 107, 152)"/><rect x="409.00" y="702.70" width="9.13" height="7.00" fill="rgb(39, 99, 142)"/><rect x="417.83" y="702.70" width="9.13" height="7.00" fill="rgb(40, 102, 146)"/><rect x="426.67" y="702.70" width="9.13" height="7.00" fill="rgb(38, 98, 141)"/><rect x="435.50" y="702.70" width="9.13" height="7.00" fill="rgb(41, 103, 147)"/><rect x="444.33" y="702.70" width="9.13" height="7.00" fill="rgb(38, 97, 140)"/><rect x="453.17" y="702.70" width="9.13" height="7.00" fill="rgb(35, 93, 134)"/></svg>
<svg style="position:absolute;left:0;top:0;filter:blur(0.7px)" width="1892" height="991"><rect x="476.00" y="696.60" width="10.80" height="6.40" fill="rgb(39, 77, 109)"/><rect x="486.50" y="696.60" width="10.80" height="6.40" fill="rgb(40, 78, 111)"/><rect x="476.00" y="702.70" width="10.80" height="6.40" fill="rgb(40, 79, 111)"/><rect x="486.50" y="702.70" width="10.80" height="6.40" fill="rgb(41, 81, 114)"/></svg>
<div style="position:absolute;left:37.5px;top:735.27px;font-size:14px;line-height:14px;font-family:'Liberation Mono', monospace;color:#3596d6;font-weight:normal;white-space:pre;letter-spacing:0px;">2019-06-12 14:54:12</div>
<div style="position:absolute;left:304px;top:735.27px;font-size:14px;line-height:14px;font-family:'Liberation Mono', monospace;color:#3596d6;font-weight:normal;white-space:pre;letter-spacing:0px;">Dan_macbook_pro</div>
<div style="position:absolute;left:784px;top:735.27px;font-size:14px;line-height:14px;font-family:'Liberation Mono', monospace;color:#3596d6;font-weight:normal;white-space:pre;letter-spacing:0px;">success</div>
<div style="position:absolute;left:897px;top:735.27px;font-size:14px;line-height:14px;font-family:'Liberation Mono', monospace;color:#3596d6;font-weight:normal;white-space:pre;letter-spacing:0px;">Apple Configurator 2</div>
<div style="position:absolute;left:897px;top:759.27px;font-size:14px;line-height:14px;font-family:'Liberation Mono', monospace;color:#3596d6;font-weight:normal;white-space:pre;letter-spacing:0px;">Autoupdate</div>
<div style="position:absolute;left:897px;top:783.27px;font-size:14px;line-height:14px;font-family:'Liberation Mono', monospace;color:#3596d6;font-weight:normal;white-space:pre;letter-spacing:0px;">Finder</div>
<div style="position:absolute;left:897px;top:807.27px;font-size:14px;line-height:14px;font-family:'Liberation Mono', monospace;color:#3596d6;font-weight:normal;white-space:pre;letter-spacing:0px;">GitHub Desktop</div>
<div style="position:absolute;left:897px;top:831.27px;font-size:14px;line-height:14px;font-family:'Liberation Mono', monospace;color:#3596d6;font-weight:normal;white-space:pre;letter-spacing:0px;">Installer</div>
<div style="position:absolute;left:897px;top:855.27px;font-size:14px;line-height:14px;font-family:'Liberation Mono', monospace;color:#3596d6;font-weight:normal;white-space:pre;letter-spacing:0px;">com.apple.preferences.configurationprofiles.remoteservice</div>
<div style="position:absolute;left:897px;top:879.27px;font-size:14px;line-height:14px;font-family:'Liberation Mono', monospace;color:#3596d6;font-weight:normal;white-space:pre;letter-spacing:0px;">coreauthd</div>
<div style="position:absolute;left:897px;top:903.27px;font-size:14px;line-height:14px;font-family:'Liberation Mono', monospace;color:#3596d6;font-weight:normal;white-space:pre;letter-spacing:0px;">lldb-rpc-server</div>
<div style="position:absolute;left:897px;top:927.27px;font-size:14px;line-height:14px;font-family:'Liberation Mono', monospace;color:#3596d6;font-weight:normal;white-space:pre;letter-spacing:0px;">storedownloadd</div>
<div style="position:absolute;left:1560px;width:62px;text-align:right;top:735.27px;font-size:14px;line-height:14px;font-family:'Liberation Mono', monospace;color:#3596d6">153</div>
<div style="position:absolute;left:1651.5px;top:735.27px;font-size:14px;line-height:14px;font-family:'Liberation Mono', monospace;color:#3596d6;font-weight:normal;white-space:pre;letter-spacing:0px;">dan</div>
<div style="position:absolute;left:1748.5px;top:735.27px;font-size:14px;line-height:14px;font-family:'Liberation Mono', monospace;color:#3596d6;font-weight:normal;white-space:pre;letter-spacing:0px;">dan</div>
<div style="position:absolute;left:1869px;top:0px;width:1px;height:991px;background:rgba(255,255,255,0.05);"></div>
<div style="position:absolute;left:1548px;top:859px;width:327px;height:118px;border-radius:11px;background:rgb(110,113,117);overflow:hidden;box-shadow:0 0 0 1px rgba(0,0,0,0.18), inset 1px 1px 0 rgba(255,255,255,0.10);"><div style="position:absolute;left:0;top:93px;width:321px;height:30px;background:rgb(100,103,107);"></div></div>
<svg style="position:absolute;left:0;top:0" width="1892" height="991" viewBox="0 0 1892 991">
<g fill="none" stroke="#22445f" stroke-width="3.8" stroke-linejoin="round" stroke-linecap="butt">
<path d="M1579.5 913.2 H1600.5 V924 Q1600.5 930.3 1606 930.3"/>
<path d="M1577.5 930.3 H1622 Q1628 930.3 1628 924 V916.5"/>
<path d="M1628 924 Q1628 930.3 1634 930.3 H1641.5 Q1647.6 930.3 1647.6 924 V915.5"/>
<path d="M1647.6 924 Q1647.6 930 1653 930 H1652 Q1658 930 1658 924 V916.4"/>
<path d="M1658 924 Q1658 930 1664 930 H1694.5 Q1700.5 930 1700.5 924 V913.2 H1675 L1697 899.5"/>
<path d="M1700.5 924 Q1700.5 930 1706.5 930 H1732"/>
<ellipse cx="1732.2" cy="921.6" rx="9.5" ry="8.6"/>
<path d="M1846.5 898.2 H1768 Q1757.5 898.2 1757 909 V932.5"/>
</g>
<g fill="#22445f">
<circle cx="1647.3" cy="909.8" r="1.6"/>
<circle cx="1617" cy="939.3" r="1.5"/>
<circle cx="1622.5" cy="939.3" r="1.5"/>
</g>
<circle cx="1780.8" cy="922.2" r="11.6" fill="#e0574c" stroke="rgba(90,50,30,0.45)" stroke-width="1"/>
<circle cx="1808.7" cy="922.2" r="11.6" fill="#e6b13c" stroke="rgba(90,70,20,0.45)" stroke-width="1"/>
<circle cx="1835.9" cy="922.2" r="11.6" fill="#59b44b" stroke="rgba(40,80,30,0.45)" stroke-width="1"/>
</svg>
<div style="position:absolute;left:1598px;top:962.80px;font-size:15px;line-height:15px;font-family:'Liberation Sans', sans-serif;color:#9fa2a5;font-weight:normal;white-space:pre;letter-spacing:0.4px;">« prev</div>
<div style="position:absolute;left:1653px;top:955px;width:32px;height:29px;border:1px solid #3d93cc;border-radius:3px;"></div>
<div style="position:absolute;left:1667.5px;top:962.80px;font-size:15px;line-height:15px;font-family:'Liberation Sans', sans-serif;color:#84b4d4;font-weight:normal;white-space:pre;letter-spacing:0px;">1</div>
<div style="position:absolute;left:1698.5px;top:962.80px;font-size:15px;line-height:15px;font-family:'Liberation Sans', sans-serif;color:#f2f2f2;font-weight:normal;white-space:pre;letter-spacing:0px;">2</div>
<div style="position:absolute;left:1732px;top:962.80px;font-size:15px;line-height:15px;font-family:'Liberation Sans', sans-serif;color:#f2f2f2;font-weight:normal;white-space:pre;letter-spacing:0px;">3</div>
<div style="position:absolute;left:1765px;top:962.80px;font-size:15px;line-height:15px;font-family:'Liberation Sans', sans-serif;color:#f2f2f2;font-weight:normal;white-space:pre;letter-spacing:0px;">4</div>
<div style="position:absolute;left:1797px;top:962.80px;font-size:15px;line-height:15px;font-family:'Liberation Sans', sans-serif;color:#f2f2f2;font-weight:normal;white-space:pre;letter-spacing:0.4px;">next »</div>
</body></html>
